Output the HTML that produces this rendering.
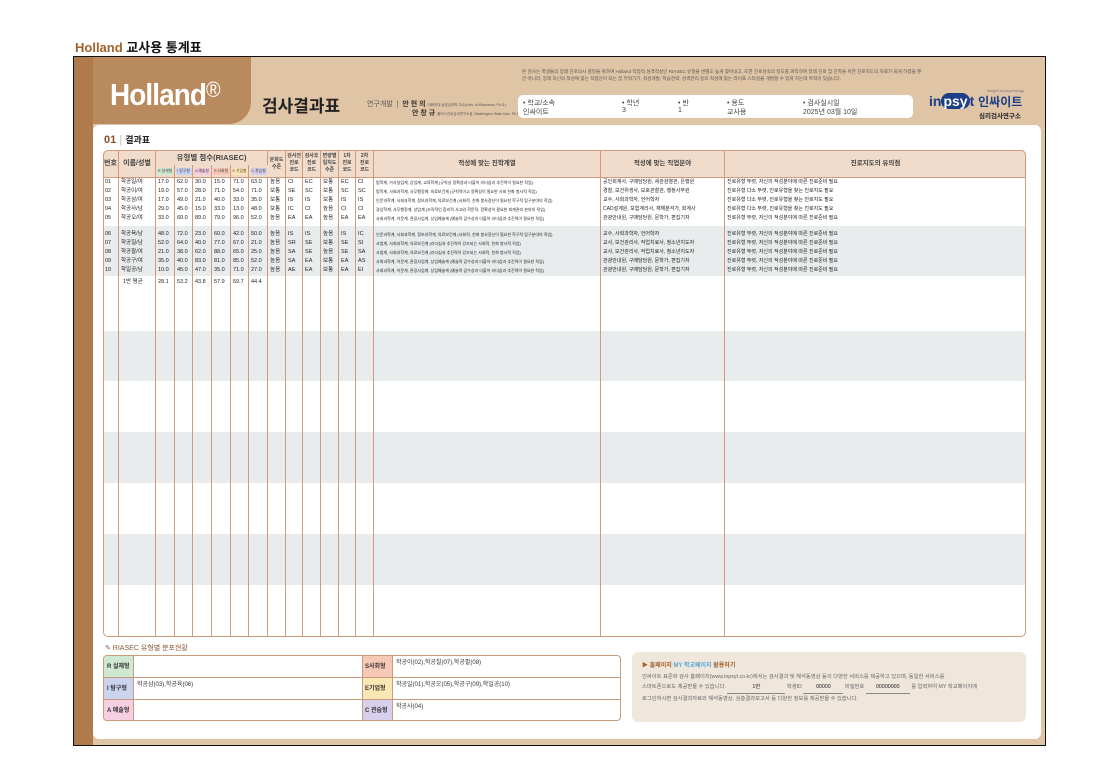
<!DOCTYPE html>
<html><head><meta charset="utf-8"><style>
*{margin:0;padding:0;box-sizing:border-box}
body{width:1113px;height:780px;background:#fff;position:relative;font-family:"Liberation Sans","Noto Sans CJK KR",sans-serif;overflow:hidden;color:#333}
.a{position:absolute}
.frame{left:73px;top:56px;width:973px;height:690px;border:1px solid #111;background:#dfc4a6;overflow:hidden}
.band{position:absolute;left:104px;width:921px;background:#e8ecec}
.tw{position:absolute;left:103px;top:150px;width:923px;height:487px;overflow:hidden;border-radius:5px}
table{width:923px;border-collapse:separate;border-spacing:0;table-layout:fixed;font-size:5.5px;color:#222}
td,th{border-right:1px solid #cf9b7a;padding:0 0 0 2px;white-space:nowrap;overflow:hidden;height:9px;line-height:9px;text-align:left}
td:last-child,th:last-child{border-right:none}
th{background:#f1dccb;font-weight:bold;color:#444;text-align:center;padding:0;line-height:7px;border-bottom:1px solid #cf9b7a}
.lbl{display:inline-block;font-size:3.8px;width:16px;height:7px;line-height:7px;border-radius:1px;font-weight:normal}
tr.sp td{font-size:0;line-height:0;height:auto}
.wrap{position:absolute;left:103px;top:150px;width:923px;height:487px;border:1px solid #cf9b7a;border-radius:5px}
.dist{position:absolute;left:103px;top:655px;width:518px;height:66px;border:1px solid #c99b7d;border-radius:4px;overflow:hidden;background:#fff}
.dist div{position:absolute;font-size:6px}
</style></head><body>
<div class="a" style="left:75px;top:37px;font-size:13px;font-weight:bold;color:#111"><span style="color:#a2602a">Holland</span> 교사용 통계표</div>
<div class="a frame">
 <div class="a" style="left:0;top:0;width:19px;height:690px;background:#b07a4c"></div>
 <div class="a" style="left:19px;top:0;width:158px;height:67px;background:#b98a5e;border-bottom-right-radius:22px"></div>
 <div class="a" style="left:36px;top:20px;font-family:'Liberation Sans Narrow','Liberation Sans',sans-serif;font-weight:bold;font-size:31px;color:#fff;letter-spacing:-1px;transform:scaleX(.9);transform-origin:left">Holland<span style="font-weight:normal;font-size:22px;vertical-align:top">®</span></div>
 <div class="a" style="left:188px;top:35px;font-size:17px;font-weight:bold;color:#222">검사결과표</div>
 <div class="a" style="left:293px;top:42px;font-size:7px;color:#555">연구개발 &nbsp;| &nbsp;<b style="color:#333">안 현 의</b> <span style="font-size:3.5px">이화여대 상담심리학 교수(Univ. of Wisconsin, Ph.D.)</span></div>
 <div class="a" style="left:338px;top:51px;font-size:7px;color:#333"><b>안 창 규</b> <span style="font-size:3.5px;color:#555">플러스진로심리연구소장, Washington State Univ. Ph.D.</span></div>
 <div class="a" style="left:448px;top:11px;width:400px;font-size:4.6px;line-height:7px;color:#555">본 검사는 학생들의 장래 진로의사 결정을 위하여 Holland 직업적 성격적성인 RIASEC 유형을 변별도 높게 찾아내고, 또한 진로성숙의 정도를 파악하여 장래 진로 및 진학을 위한 진로지도의 자료가 되게 하였을 뿐만 아니라, 장래 자신의 적성에 맞는 직업인이 되는 꿈 키워가기, 적성개발, 학습전략, 성격관리 등의 적성에 맞는 라이프 스타일을 개발할 수 있게 하는데 목적이 있습니다.</div>
 <div class="a" style="left:444px;top:38px;width:395px;height:23px;background:#fff;border-radius:5px;font-size:7px;color:#444">
  <div class="a" style="left:5px;top:3px">• 학교/소속</div><div class="a" style="left:5px;top:12px">인싸이트</div>
  <div class="a" style="left:104px;top:3px">• 학년</div><div class="a" style="left:104px;top:12px">3</div>
  <div class="a" style="left:160px;top:3px">• 반</div><div class="a" style="left:160px;top:12px">1</div>
  <div class="a" style="left:209px;top:3px">• 용도</div><div class="a" style="left:209px;top:12px">교사용</div>
  <div class="a" style="left:285px;top:3px">• 검사실시일</div><div class="a" style="left:285px;top:12px">2025년 03월 10일</div>
 </div>
 <div class="a" style="left:855px;top:36px;font-size:14px;font-weight:bold;color:#1d3e86">in<span style="background:#1d3e86;color:#fff;border-radius:8px;padding:0 2px">psy</span><span style="color:#1d3e86">t</span> <span style="font-size:12px">인싸이트</span></div>
 <div class="a" style="left:913px;top:31px;font-size:4px;color:#777">insight of psychology</div>
 <div class="a" style="left:905px;top:53px;font-size:6.5px;font-weight:bold;color:#222">심리검사연구소</div>
 <div class="a" style="left:19px;top:68px;width:948px;height:614px;background:#fff;border-radius:6px"></div>
</div>
<div class="a" style="left:104px;top:133px;font-size:11px;color:#222"><b style="color:#8a4f25">01</b> <span style="color:#bbb">|</span> <b style="font-size:9px">결과표</b></div>
<div class="band" style="top:226px;height:50px"></div>
<div class="band" style="top:331px;height:50px"></div>
<div class="band" style="top:432px;height:51px"></div>
<div class="band" style="top:534px;height:51px"></div>
<div class="tw"><table>
<colgroup><col style="width:16px"><col style="width:37px"><col style="width:19px"><col style="width:18px"><col style="width:19px"><col style="width:19px"><col style="width:18px"><col style="width:19px"><col style="width:18px"><col style="width:17px"><col style="width:18px"><col style="width:18px"><col style="width:17px"><col style="width:18px"><col style="width:227px"><col style="width:124px"><col style="width:301px"></colgroup>
<tr><th rowspan="2" style="height:28px;font-size:7px">번호</th><th rowspan="2" style="font-size:7px">이름/성별</th><th colspan="6" style="height:15px;font-size:7.5px;border-bottom:none">유형별 점수(RIASEC)</th><th rowspan="2" style="font-size:5px">분화도<br>수준</th><th rowspan="2" style="font-size:5px">검사전<br>진로<br>코드</th><th rowspan="2" style="font-size:5px">검사후<br>진로<br>코드</th><th rowspan="2" style="font-size:5px">변량별<br>일치도<br>수준</th><th rowspan="2" style="font-size:5px">1차<br>진로<br>코드</th><th rowspan="2" style="font-size:5px">2차<br>진로<br>코드</th><th rowspan="2" style="font-size:6.5px">적성에 맞는 진학계열</th><th rowspan="2" style="font-size:6.5px">적성에 맞는 직업분야</th><th rowspan="2" style="font-size:6.5px">진로지도의 유의점</th></tr>
<tr><th style="height:13px"><span class="lbl" style="background:#cde8d0">R 실재형</span></th><th><span class="lbl" style="background:#c9d2ee">I 탐구형</span></th><th><span class="lbl" style="background:#f6cde0">A 예술형</span></th><th><span class="lbl" style="background:#f8c6b4">S 사회형</span></th><th><span class="lbl" style="background:#fbe6b2">E 기업형</span></th><th><span class="lbl" style="background:#d6cdea">C 관습형</span></th></tr>
<tr><td>01</td><td>학공일/여</td><td>17.0</td><td>62.0</td><td>30.0</td><td>15.0</td><td>71.0</td><td>63.0</td><td>높음</td><td>CI</td><td>EC</td><td>보통</td><td>EC</td><td>CI</td><td style="font-size:4px">법학계, 가사실업계, 상업계, 교육학계 (규칙성 정확성과 더불어 리더십과 추진력이 필요한 직업)</td><td style="font-size:5px">공인회계사, 구매담당원, 세관검열관, 은행원</td><td style="font-size:5px">진로유형 뚜렷, 자신의 적성분야에 따른 진로준비 필요</td></tr>
<tr><td>02</td><td>학공이/여</td><td>19.0</td><td>57.0</td><td>28.0</td><td>71.0</td><td>54.0</td><td>71.0</td><td>보통</td><td>SE</td><td>SC</td><td>보통</td><td>SC</td><td>SC</td><td style="font-size:4px">법학계, 사회과학계, 사무행정계, 의료보건계 (규칙적이고 정확성이 필요한 사회 친화 봉사적 직업)</td><td style="font-size:5px">경찰, 보건위생사, 보호관찰관, 행정사무원</td><td style="font-size:5px">진로유형 다소 뚜렷, 진로유형을 찾는 진로지도 필요</td></tr>
<tr><td>03</td><td>학공삼/여</td><td>17.0</td><td>49.0</td><td>21.0</td><td>40.0</td><td>33.0</td><td>35.0</td><td>보통</td><td>IS</td><td>IS</td><td>보통</td><td>IS</td><td>IS</td><td style="font-size:4px">인문과학계, 사회과학계, 정보과학계, 의료보건계 (사회적, 친화 봉사정신이 필요한 학구적 탐구분야의 직업)</td><td style="font-size:5px">교수, 사회과학자, 언어학자</td><td style="font-size:5px">진로유형 다소 뚜렷, 진로유형을 찾는 진로지도 필요</td></tr>
<tr><td>04</td><td>학공사/남</td><td>29.0</td><td>45.0</td><td>15.0</td><td>33.0</td><td>13.0</td><td>48.0</td><td>보통</td><td>IC</td><td>CI</td><td>높음</td><td>CI</td><td>CI</td><td style="font-size:4px">경상학계, 사무행정계, 상업계 (조직적인 합리적 사고와 학문적, 정확성이 필요한 회계관리 분야의 직업)</td><td style="font-size:5px">CAD설계원, 보험계리사, 재해분석가, 회계사</td><td style="font-size:5px">진로유형 다소 뚜렷, 진로유형을 찾는 진로지도 필요</td></tr>
<tr><td>05</td><td>학공오/여</td><td>33.0</td><td>60.0</td><td>89.0</td><td>79.0</td><td>96.0</td><td>52.0</td><td>높음</td><td>EA</td><td>EA</td><td>높음</td><td>EA</td><td>EA</td><td style="font-size:4px">사회과학계, 어문계, 관광사업계, 상업예술계 (예술적 감수성과 더불어 리더십과 추진력이 필요한 직업)</td><td style="font-size:5px">관광안내원, 구매담당원, 문학가, 편집기자</td><td style="font-size:5px">진로유형 뚜렷, 자신의 적성분야에 따른 진로준비 필요</td></tr>
<tr class="sp"><td style="height:7px"></td><td></td><td></td><td></td><td></td><td></td><td></td><td></td><td></td><td></td><td></td><td></td><td></td><td></td><td></td><td></td><td></td></tr>
<tr><td>06</td><td>학공육/남</td><td>48.0</td><td>72.0</td><td>23.0</td><td>60.0</td><td>42.0</td><td>50.0</td><td>높음</td><td>IS</td><td>IS</td><td>높음</td><td>IS</td><td>IC</td><td style="font-size:4px">인문과학계, 사회과학계, 정보과학계, 의료보건계 (사회적, 친화 봉사정신이 필요한 학구적 탐구분야의 직업)</td><td style="font-size:5px">교수, 사회과학자, 언어학자</td><td style="font-size:5px">진로유형 뚜렷, 자신의 적성분야에 따른 진로준비 필요</td></tr>
<tr><td>07</td><td>학공칠/남</td><td>52.0</td><td>64.0</td><td>40.0</td><td>77.0</td><td>67.0</td><td>21.0</td><td>높음</td><td>SR</td><td>SE</td><td>보통</td><td>SE</td><td>SI</td><td style="font-size:4px">사범계, 사회과학계, 의료보건계 (리더십과 추진력이 강조되는 사회적, 친화 봉사적 직업)</td><td style="font-size:5px">교사, 보건관리사, 작업치료사, 청소년지도자</td><td style="font-size:5px">진로유형 뚜렷, 자신의 적성분야에 따른 진로준비 필요</td></tr>
<tr><td>08</td><td>학공팔/여</td><td>21.0</td><td>38.0</td><td>62.0</td><td>88.0</td><td>65.0</td><td>25.0</td><td>높음</td><td>SA</td><td>SE</td><td>높음</td><td>SE</td><td>SA</td><td style="font-size:4px">사범계, 사회과학계, 의료보건계 (리더십과 추진력이 강조되는 사회적, 친화 봉사적 직업)</td><td style="font-size:5px">교사, 보건관리사, 작업치료사, 청소년지도자</td><td style="font-size:5px">진로유형 뚜렷, 자신의 적성분야에 따른 진로준비 필요</td></tr>
<tr><td>09</td><td>학공구/여</td><td>35.0</td><td>40.0</td><td>83.0</td><td>81.0</td><td>85.0</td><td>52.0</td><td>높음</td><td>SA</td><td>EA</td><td>보통</td><td>EA</td><td>AS</td><td style="font-size:4px">사회과학계, 어문계, 관광사업계, 상업예술계 (예술적 감수성과 더불어 리더십과 추진력이 필요한 직업)</td><td style="font-size:5px">관광안내원, 구매담당원, 문학가, 편집기자</td><td style="font-size:5px">진로유형 뚜렷, 자신의 적성분야에 따른 진로준비 필요</td></tr>
<tr><td>10</td><td>학일공/남</td><td>10.0</td><td>45.0</td><td>47.0</td><td>35.0</td><td>71.0</td><td>27.0</td><td>높음</td><td>AE</td><td>EA</td><td>보통</td><td>EA</td><td>EI</td><td style="font-size:4px">사회과학계, 어문계, 관광사업계, 상업예술계 (예술적 감수성과 더불어 리더십과 추진력이 필요한 직업)</td><td style="font-size:5px">관광안내원, 구매담당원, 문학가, 편집기자</td><td style="font-size:5px">진로유형 뚜렷, 자신의 적성분야에 따른 진로준비 필요</td></tr>
<tr class="sp"><td style="height:3px"></td><td></td><td></td><td></td><td></td><td></td><td></td><td></td><td></td><td></td><td></td><td></td><td></td><td></td><td></td><td></td><td></td></tr>
<tr><td></td><td style="padding-left:4px">1반 평균</td><td>28.1</td><td>53.2</td><td>43.8</td><td>57.9</td><td>59.7</td><td>44.4</td><td></td><td></td><td></td><td></td><td></td><td></td><td></td><td></td><td></td></tr>
<tr class="sp"><td style="height:400px"></td><td></td><td></td><td></td><td></td><td></td><td></td><td></td><td></td><td></td><td></td><td></td><td></td><td></td><td></td><td></td><td></td></tr>
</table></div>
<div class="wrap"></div>
<div class="a" style="left:105px;top:643px;font-size:7px;color:#8a5a3c">✎ RIASEC 유형별 분포현황</div>
<div class="dist">
 <div style="left:0;top:0;width:29px;height:22px;background:#cfe8d2;line-height:22px;padding-left:3px;font-weight:bold">R 실재형</div>
 <div style="left:0;top:22px;width:29px;height:22px;background:#cbd3ee;line-height:22px;padding-left:3px;font-weight:bold">I 탐구형</div>
 <div style="left:0;top:44px;width:29px;height:22px;background:#f6d0e0;line-height:22px;padding-left:3px;font-weight:bold">A 예술형</div>
 <div style="left:259px;top:0;width:29px;height:22px;background:#f8c8b6;line-height:22px;padding-left:2px;font-weight:bold">S사회형</div>
 <div style="left:259px;top:22px;width:29px;height:22px;background:#fbe7b4;line-height:22px;padding-left:2px;font-weight:bold">E기업형</div>
 <div style="left:259px;top:44px;width:29px;height:22px;background:#d7cfeb;line-height:22px;padding-left:2px;font-weight:bold">C 관습형</div>
 <div style="left:0;top:21px;width:518px;border-top:1px solid #c99b7d"></div>
 <div style="left:0;top:43px;width:518px;border-top:1px solid #c99b7d"></div>
 <div style="left:29px;top:0;height:66px;border-left:1px solid #c99b7d"></div>
 <div style="left:258px;top:0;height:66px;border-left:1px solid #c99b7d"></div>
 <div style="left:288px;top:0;height:66px;border-left:1px solid #c99b7d"></div>
 <div style="left:292px;top:1px">학공이(02),학공칠(07),학공팔(08)</div>
 <div style="left:33px;top:23px">학공삼(03),학공육(06)</div>
 <div style="left:292px;top:23px">학공일(01),학공오(05),학공구(09),학일공(10)</div>
 <div style="left:292px;top:45px">학공사(04)</div>
</div>
<div class="a" style="left:632px;top:652px;width:394px;height:70px;background:#efe6dc;border-radius:6px;font-size:5.3px;color:#666;line-height:10.5px;padding:9px 10px">
 <div style="font-weight:bold;color:#a2602a;font-size:6px">▶ 홈페이지 <span style="color:#5aa6d8">MY 학교페이지</span> 활용하기</div>
 <div>인싸이트 표준화 검사 홈페이지(www.inpsyt.co.kr)에서는 검사결과 및 해석동영상 등의 다양한 서비스를 제공하고 있으며, 동일한 서비스를</div>
 <div>스마트폰으로도 제공받을 수 있습니다. <span style="display:inline-block;width:58px;border-bottom:1px solid #888;text-align:center;color:#222">1반</span> 학생ID <span style="display:inline-block;width:40px;border-bottom:1px solid #888;text-align:center;color:#222">00000</span> 비밀번호 <span style="display:inline-block;width:44px;border-bottom:1px solid #888;text-align:center;color:#222">00000000</span> 를 입력하여 MY 학교페이지에</div>
 <div>로그인하시면 검사결과자료와 해석동영상, 심층결과보고서 등 다양한 정보를 제공받을 수 있습니다.</div>
</div>
</body></html>
